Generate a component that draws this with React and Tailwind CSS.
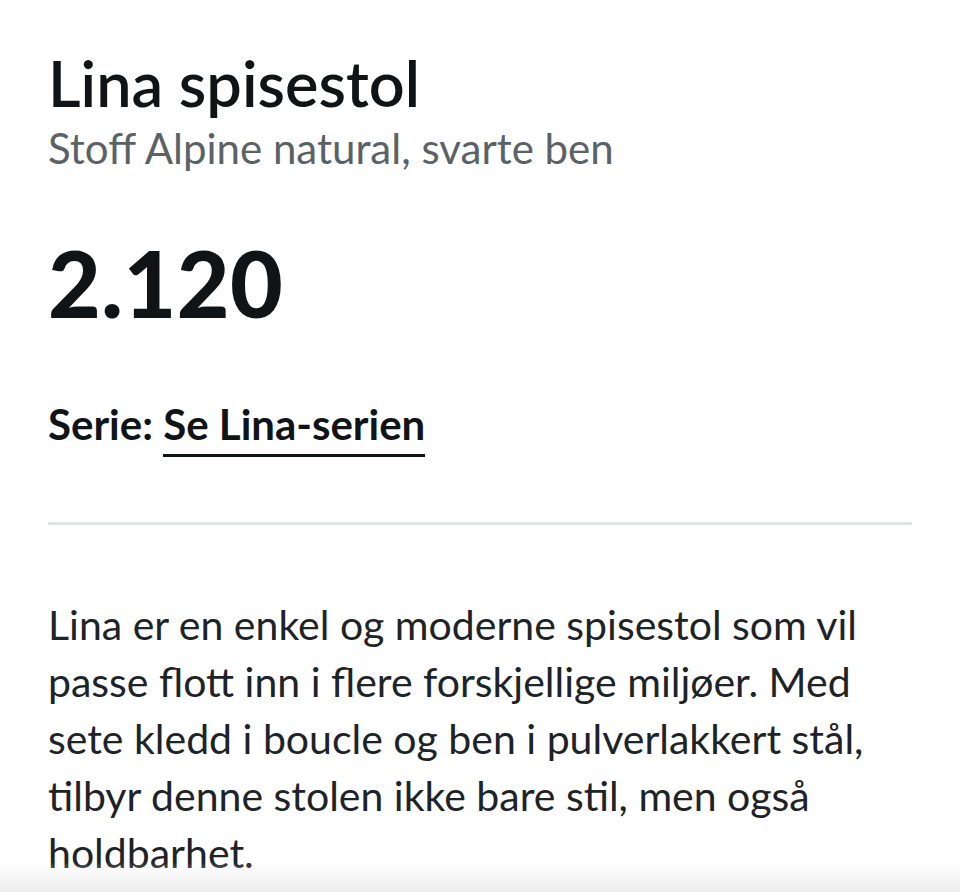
export default function App() {
  return (
    <div className="relative min-h-[892px] overflow-hidden bg-white px-12 pt-[51px] text-[#101416] font-['Lato',sans-serif]">
      <h1 className="text-[63px] font-semibold leading-[63px]">Lina spisestol</h1>
      <p className="mt-[13px] text-[42px] leading-[42px] text-[#5a6266]">Stoff Alpine natural, svarte ben</p>

      <div className="mt-[68px] text-[91px] font-black leading-[91px] tracking-[0.5px]">2.120</div>

      <div className="mt-[75px] text-[42px] font-bold leading-[42px]">
        Serie:{" "}
        <a href="#" className="border-b-[3px] border-[#101416] pb-[5px]">
          Se Lina-serien
        </a>
      </div>

      <hr className="mt-[77px] border-t-[3px] border-[#e0e4e5]" />

      <p className="mt-[71px] text-[41px] leading-[57px] text-[#1d2326]">
        Lina er en enkel og moderne spisestol som vil passe flott inn i flere forskjellige miljøer. Med sete kledd i boucle og ben i pulverlakkert stål, tilbyr denne stolen ikke bare stil, men også holdbarhet.
      </p>

      <div className="pointer-events-none absolute bottom-0 left-0 right-0 h-[30px] bg-gradient-to-b from-white/0 to-[#ececec]" />
    </div>
  );
}
